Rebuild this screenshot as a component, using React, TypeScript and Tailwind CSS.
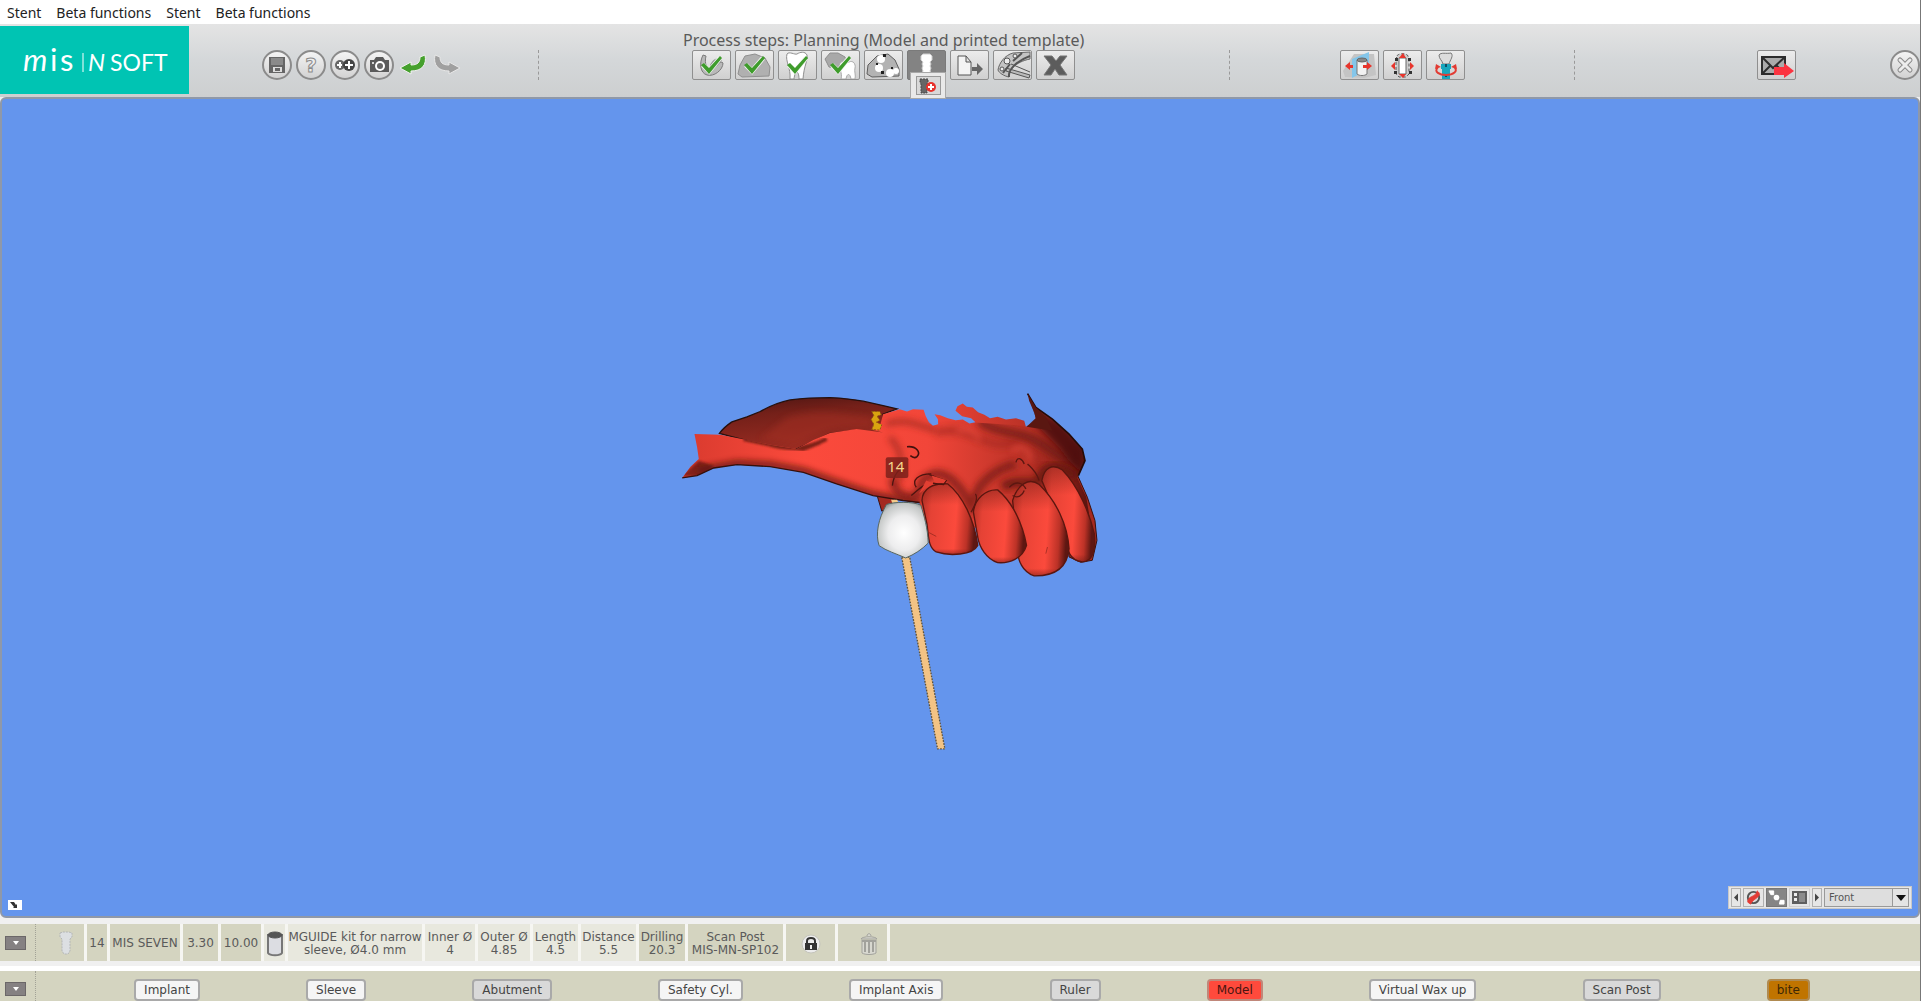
import React, { useState } from "react"

const menuItems = ["Stent", "Beta functions", "Stent", "Beta functions"]

interface Layer {
  name: string
  tone: "on" | "off" | "red" | "orange"
}

const layers: Layer[] = [
  { name: "Implant", tone: "on" },
  { name: "Sleeve", tone: "on" },
  { name: "Abutment", tone: "off" },
  { name: "Safety Cyl.", tone: "on" },
  { name: "Implant Axis", tone: "on" },
  { name: "Ruler", tone: "off" },
  { name: "Model", tone: "red" },
  { name: "Virtual Wax up", tone: "on" },
  { name: "Scan Post", tone: "off" },
  { name: "bite", tone: "orange" },
]

const tones = {
  on: "bg-[#f5f5f5] border-[#a9a9a9] text-[#444]",
  off: "bg-[#d9d9d9] border-[#a9a9a9] text-[#444]",
  red: "bg-[#ff4a3c] border-[#c0877a] text-[#4a1510]",
  orange: "bg-[#c07400] border-[#b08a50] text-[#3d2705]",
}

const GreenCheck = () => (
  <>
    <path
      d="M11 14 L17 20 L28 7"
      fill="none"
      stroke="#f4f4f4"
      strokeWidth="5"
    />
    <path
      d="M9 14 L12 12 L17 17 L28 5 L30 7 L17 23 Z"
      fill="#3f9c2c"
    />
  </>
)

const Arch = () => (
  <>
    <path
      d="M11 4 C7 12 8 22 15 24 C22 26 31 19 31 12 C29 9 24 14 20 17 C15 19 12 13 14 5 Z"
      fill="#b9b9b9"
      stroke="#7b7b7b"
    />
    <path d="M18 14 C21 8 26 5 30 9 C28 13 24 16 19 19 Z" fill="#959595" />
    <GreenCheck />
  </>
)

const ModelBlock = () => (
  <>
    <path
      d="M3 23 L5 14 L10 5 L20 3 L30 7 L35 16 L34 25 L7 26 Z"
      fill="#b0b0b0"
      stroke="#8f8f8f"
    />
    <GreenCheck />
  </>
)

const Tooth = () => (
  <>
    <path
      d="M9 3 C11 0 17 4 19 3 C22 1 27 0 29 4 C30 10 26 14 25 28 L21 28 C21 19 17 19 16 28 L12 28 C13 17 7 10 9 3 Z"
      fill="#fff"
      stroke="#8f8f8f"
    />
    <GreenCheck />
  </>
)

const ModelTooth = () => (
  <>
    <path
      d="M4 8 L9 2 L17 2 L24 6 L26 13 L18 18 L8 16 Z"
      fill="#a9a9a9"
      stroke="#8f8f8f"
    />
    <path
      d="M19 12 C22 9 25 13 28 11 C32 9 35 13 34 17 C33 20 35 24 34 28 L30 28 C29 22 26 22 25 28 L20 28 C22 22 17 17 19 12 Z"
      fill="#fff"
      stroke="#aaa"
    />
    <GreenCheck />
  </>
)

const Template = () => (
  <>
    <path
      d="M3 23 L4 14 L13 5 L24 3 L31 9 L35 18 L35 25 L8 26 Z"
      fill="#b3b3b3"
      stroke="#5e5e5e"
    />
    <circle cx="17" cy="8" r="4" fill="#fff" />
    <circle cx="15" cy="17" r="4" fill="#fff" />
    <circle cx="26" cy="22" r="4" fill="#fff" />
    <circle cx="32" cy="20" r="3" fill="#fff" />
    <path
      d="M19 3h3v3h-3z M12 12h2v2h-2z M17 20h3v3h-3z M27 16h2v2h-2z"
      fill="#222"
    />
  </>
)

const ImplantStep = () => (
  <path
    d="M14 5 L16 3 L23 3 L25 5 L25 9 L23 11 L24 13 L23 15 L24 17 L23 20 L24 22 L15 22 L16 20 L15 17 L16 15 L15 13 L16 11 L14 9 Z"
    fill="#fff"
    stroke="#cfcfcf"
  />
)

const ExportFile = () => (
  <>
    <path
      d="M8 5 L16 5 L21 11 L21 24 L8 24 Z M16 5 L16 11 L21 11"
      fill="#f4f4f4"
      stroke="#555"
    />
    <path d="M22 16 L27 16 L27 12 L33 18 L27 24 L27 20 L22 20 Z" fill="#666" />
  </>
)

const Guide = () => (
  <>
    <path
      d="M37 1 L20 2 C12 4 6 12 5 19 C6 22 11 25 16 26 C15 20 22 11 37 8 Z"
      fill="#c4c4c4"
      stroke="#666"
    />
    <path
      d="M13 17 L37 24 L36 27 L13 20 Z M18 13 L37 21"
      fill="#bbb"
      stroke="#555"
    />
    <path
      d="M16 26 C15 18 24 10 37 5 M10 22 L17 13 M20 10 L29 2"
      fill="none"
      stroke="#555"
      strokeWidth="2"
    />
    <circle cx="14" cy="10" r="3" fill="#eee" stroke="#555" />
    <circle cx="22" cy="5" r="2" fill="#eee" stroke="#555" />
    <circle cx="9" cy="18" r="2" fill="#eee" stroke="#555" />
  </>
)

const CrossStep = () => (
  <path
    d="M8 5 H16 L20 10 L24 5 H31 L24 14 L31 24 H23 L19 18 L15 24 H8 L15 14 Z"
    fill="#5c5c5c"
    stroke="#777"
  />
)

const steps = [
  { label: "Scan data", icon: <Arch /> },
  { label: "Model", icon: <ModelBlock /> },
  { label: "Tooth", icon: <Tooth /> },
  { label: "Wax up", icon: <ModelTooth /> },
  { label: "Registration", icon: <Template /> },
  { label: "Planning", icon: <ImplantStep /> },
  { label: "Export", icon: <ExportFile /> },
  { label: "Template", icon: <Guide /> },
  { label: "Finish", icon: <CrossStep /> },
]

const RoundButton = ({
  label,
  children,
}: {
  label: string
  children: React.ReactNode
}) => (
  <button
    type="button"
    aria-label={label}
    className="flex size-[30px] shrink-0 items-center justify-center rounded-full border-2 border-[#8b8b8b] bg-linear-to-b from-[#f4f4f4] to-[#d2d2d2]"
  >
    <svg viewBox="0 0 26 26" className="size-[26px]">
      {children}
    </svg>
  </button>
)

const ToolButton = ({
  label,
  active,
  children,
}: {
  label: string
  active?: boolean
  children: React.ReactNode
}) => (
  <button
    type="button"
    aria-label={label}
    className={`h-[30px] w-[39px] shrink-0 rounded-xs border ${
      active
        ? "border-[#7a7a7a] bg-[#838383]"
        : "border-[#8f8f8f] bg-linear-to-b from-[#ececec] to-[#d0d0d0]"
    }`}
  >
    <svg viewBox="1 0 37 28" className="h-[28px] w-[37px]">
      {children}
    </svg>
  </button>
)

const Logo = () => (
  <div className="mt-[2px] h-[68px] w-[189px] shrink-0 bg-[#00c4b3]">
    <svg
      viewBox="0 0 189 68"
      className="size-full font-[Lato,sans-serif]"
      fill="#fff"
    >
      <text x="23" y="45" fontSize="31" fontStyle="italic">
        m
      </text>
      <text x="50" y="45" fontSize="31">
        i
      </text>
      <text x="60" y="45" fontSize="31">
        s
      </text>
      <path d="M83 27 V46" stroke="#fff" />
      <text x="88" y="45" fontSize="24" fontStyle="italic">
        N
      </text>
      <text x="110" y="45" fontSize="23">
        SOFT
      </text>
    </svg>
  </div>
)

const JawModel = () => (
  <svg
    viewBox="0 0 1921 820"
    className="absolute inset-0 size-full"
    role="img"
    aria-label="Jaw model"
  >
    <defs>
      <linearGradient id="palate" x1="0" y1="0" x2="0.3" y2="1">
        <stop offset="0" stopColor="#4a1512" />
        <stop offset="0.35" stopColor="#742019" />
        <stop offset="1" stopColor="#9a2c22" />
      </linearGradient>
      <linearGradient id="gum" x1="0" y1="0" x2="1" y2="0">
        <stop offset="0" stopColor="#d83a2e" />
        <stop offset="0.3" stopColor="#fb4a3c" />
        <stop offset="0.6" stopColor="#f24639" />
        <stop offset="0.85" stopColor="#b83126" />
        <stop offset="0.95" stopColor="#861f18" />
        <stop offset="1" stopColor="#52120e" />
      </linearGradient>
      <linearGradient id="incisor" x1="0" y1="0" x2="1" y2="0.1">
        <stop offset="0" stopColor="#b23025" />
        <stop offset="0.2" stopColor="#e54235" />
        <stop offset="0.65" stopColor="#fb4a3c" />
        <stop offset="0.87" stopColor="#bc3227" />
        <stop offset="1" stopColor="#5e1712" />
      </linearGradient>
      <linearGradient id="incisorTop" x1="0" y1="0" x2="0" y2="1">
        <stop offset="0" stopColor="#6a1a13" stopOpacity="0.45" />
        <stop offset="0.3" stopColor="#6a1a13" stopOpacity="0" />
        <stop offset="0.92" stopColor="#6a1a13" stopOpacity="0" />
        <stop offset="1" stopColor="#6a1a13" stopOpacity="0.5" />
      </linearGradient>
      <radialGradient id="crown" cx="0.52" cy="0.55" r="0.62">
        <stop offset="0" stopColor="#ffffff" />
        <stop offset="0.5" stopColor="#ededee" />
        <stop offset="0.85" stopColor="#c3c6c5" />
        <stop offset="1" stopColor="#858d8b" />
      </radialGradient>
      <filter id="soft" x="-30%" y="-30%" width="160%" height="160%">
        <feGaussianBlur stdDeviation="9" />
      </filter>
      <filter id="edge" x="-10%" y="-10%" width="120%" height="120%">
        <feGaussianBlur stdDeviation="3" />
      </filter>
      <clipPath id="gumClip">
        <path d="M72 160 L150 162 L215 175 L300 192 L380 205 L480 155 L560 145 L610 150 L640 100 L690 85 L760 87 L770 110 L790 135 L806 130 L797 100 L835 112 L880 117 L915 125 L1070 135 L1100 112 L1075 38 L1100 80 L1150 115 L1200 160 L1240 205 L1248 240 L1225 292 L1252 350 L1275 420 L1283 480 L1270 540 L1040 400 L900 420 L760 420 L750 368 L700 360 L610 345 L500 310 L400 275 L300 258 L200 252 L130 262 L80 285 L35 292 L60 258 L85 235 L80 200 Z" />
      </clipPath>
    </defs>
    <g transform="translate(670 283) scale(0.3333)">
      <path
        d="M622 345 L672 350 L665 380 L636 392 Z"
        fill="#a32a21"
        stroke="#3c100c"
        strokeWidth="3"
      />
      <path
        d="M147 158 C160 140 175 130 185 123 L230 108 L270 92 C300 75 330 63 360 57 C400 52 440 50 480 50 C520 52 550 55 580 61 L640 74 L682 84 L640 100 L650 165 L560 148 L480 158 L370 210 L230 180 Z"
        fill="url(#palate)"
        stroke="#26100d"
        strokeWidth="4"
      />
      <path
        d="M350 110 C450 80 520 100 610 110 L600 140 C500 130 430 160 380 195 L270 175 Z"
        fill="#a22e24"
        opacity="0.55"
        filter="url(#soft)"
      />
      <path
        d="M1226 285 L1255 350 L1278 420 L1284 480 L1270 540 L1235 546 L1200 530 L1190 400 L1130 250 Z"
        fill="#a52a20"
        stroke="#3a0f0b"
        strokeWidth="3"
      />
      <path
        d="M72 160 L150 162 L215 175 L300 192 L380 205 L430 178 L480 157 L560 145 L640 155 L610 148 L632 130 L640 100 L690 85 L712 92 L730 85 L762 87 L768 105 L778 125 L790 135 L806 130 L805 115 L795 100 L812 103 L835 112 L858 118 L880 116 L900 128 L918 124 L905 112 L878 106 L858 90 L864 76 L880 68 L892 78 L910 80 L926 94 L945 102 L962 112 L985 108 L1010 116 L1040 112 L1065 120 L1070 138 L1100 118 L1097 90 L1075 38 L1100 80 L1150 115 L1200 160 L1240 205 L1248 240 L1225 292 L1252 350 L1265 430 L1100 480 L960 450 L860 430 L762 420 L750 368 L700 360 L610 345 L500 310 L400 275 L300 258 L200 252 L130 262 L80 285 L35 292 L60 258 L85 235 L80 200 Z"
        fill="url(#gum)"
      />
      <g clipPath="url(#gumClip)">
        <path
          d="M35 285 L85 240 L130 255 L100 290 Z"
          fill="#6e1b15"
          opacity="0.8"
          filter="url(#edge)"
        />
        <path
          d="M80 270 L200 248 L300 252 L400 270 L500 305 L610 342 L750 368"
          fill="none"
          stroke="#5a1510"
          strokeWidth="18"
          opacity="0.85"
          filter="url(#soft)"
        />
        <path
          d="M220 175 L330 198 L400 205 L450 185 M300 192 C350 205 400 210 470 175"
          fill="none"
          stroke="#7c2119"
          strokeWidth="12"
          filter="url(#edge)"
        />
        <path
          d="M650 130 C700 110 740 130 800 150 M660 170 C690 200 700 230 690 300"
          fill="none"
          stroke="#9c2a20"
          strokeWidth="18"
          opacity="0.7"
          filter="url(#soft)"
        />
        <path
          d="M800 155 C900 130 940 200 1010 190 C1060 180 1080 230 1120 240"
          fill="none"
          stroke="#a52c22"
          strokeWidth="22"
          opacity="0.7"
          filter="url(#soft)"
        />
        <path
          d="M930 120 C980 160 1050 150 1100 180 C1140 200 1170 230 1220 250"
          fill="none"
          stroke="#6e1b14"
          strokeWidth="28"
          opacity="0.75"
          filter="url(#soft)"
        />
        <path
          d="M670 290 C670 340 700 350 740 350 L760 300 C790 270 820 275 850 300 C880 330 890 350 905 380 L930 320 C960 280 1000 260 1040 250"
          fill="none"
          stroke="#7a1f17"
          strokeWidth="26"
          opacity="0.8"
          filter="url(#soft)"
        />
        <path
          d="M1075 38 L1110 90 L1180 130 L1245 205 L1240 280 L1200 240 L1170 200 L1100 130 Z"
          fill="#4a110d"
          opacity="0.85"
          filter="url(#soft)"
        />
        <path
          d="M1000 320 C1040 290 1080 320 1110 300 C1120 260 1160 240 1220 290"
          fill="none"
          stroke="#601610"
          strokeWidth="28"
          opacity="0.8"
          filter="url(#soft)"
        />
        <path
          d="M860 150 C890 140 925 155 930 180 M1030 210 C1050 190 1080 200 1085 240"
          fill="none"
          stroke="#ff5546"
          strokeWidth="12"
          opacity="0.6"
          filter="url(#soft)"
        />
      </g>
      <path
        d="M35 292 L80 285 L130 262 L200 252 L300 258 L400 275 L500 310 L610 345 L700 360 L750 366"
        fill="none"
        stroke="#35100c"
        strokeWidth="4"
      />
      <path
        d="M1075 38 L1100 80 L1150 115 L1200 160 L1240 205 L1248 240 L1228 285"
        fill="none"
        stroke="#260b08"
        strokeWidth="5"
      />
      <path
        d="M1075 38 L1080 60 L1095 95 L1100 112 L1072 138 L1150 150 L1130 108 L1100 80 Z"
        fill="#5a1711"
      />
      {[
        "M1118 300 C1125 260 1150 248 1180 268 C1230 320 1262 400 1276 460 C1282 510 1270 545 1240 545 C1200 540 1195 510 1190 470 Z",
        "M1030 360 C1045 310 1080 290 1110 312 C1160 360 1195 430 1200 505 C1195 560 1160 588 1095 587 C1060 575 1045 540 1046 510 Z",
        "M912 395 C915 355 950 325 985 328 C1030 365 1060 430 1072 495 C1060 535 1020 550 985 547 C950 535 930 500 925 470 Z",
        "M757 360 C758 325 790 306 835 310 C880 345 915 420 925 495 C910 525 840 528 800 515 C775 500 778 470 772 430 Z",
      ].map((d) => (
        <g key={d}>
          <path d={d} fill="url(#incisor)" />
          <path
            d={d}
            fill="url(#incisorTop)"
            stroke="#5a160f"
            strokeWidth="4"
          />
        </g>
      ))}
      <path
        d="M712 198 C740 195 755 215 742 228 C735 234 728 230 722 225"
        fill="none"
        stroke="#43110d"
        strokeWidth="5"
      />
      <path
        d="M668 315 C672 280 690 260 705 265 M740 320 C725 300 745 280 785 280 M775 280 L800 290 L830 300 L822 312 L790 308 M725 345 C750 325 755 315 780 308"
        fill="none"
        stroke="#4d140f"
        strokeWidth="4"
      />
      <path
        d="M1040 245 C1045 225 1060 235 1065 250 M1020 320 C1040 300 1060 305 1070 325 M1030 345 C1045 355 1060 345 1065 330 M1110 300 C1100 270 1085 260 1075 250 M905 395 C920 370 925 350 918 340"
        fill="none"
        stroke="#5c1711"
        strokeWidth="4"
      />
      <path
        d="M786 285 L830 298 L822 308 L795 304 Z M748 340 L770 300 L790 308 L760 330 Z"
        fill="#e23f32"
      />
      <path
        d="M775 455 L800 468 M1130 520 L1135 500"
        fill="none"
        stroke="#8a241b"
        strokeWidth="2"
      />
      <path
        d="M606 92 L630 92 L634 102 L622 106 L630 118 L620 124 L636 132 L630 148 L606 146 L612 130 L604 116 L612 104 Z"
        fill="#d9a410"
        stroke="#8f5f10"
        strokeWidth="3"
        strokeDasharray="6 4"
      />
      <path d="M664 358 L682 358 L688 370 L668 370 Z" fill="#f4c98a" />
      <path
        d="M696 530 L720 530 L826 1108 L804 1108 Z"
        fill="#f3c384"
        stroke="#5d523c"
        strokeWidth="4"
        strokeDasharray="5 4"
      />
      <path
        d="M650 372 C670 364 730 362 754 374 C764 410 774 440 776 488 C756 508 735 522 708 533 C680 520 650 512 628 496 C616 460 626 415 650 372 Z"
        fill="url(#crown)"
        stroke="#56655f"
        strokeWidth="3"
      />
      <rect
        x="648"
        y="230"
        width="68"
        height="62"
        rx="6"
        fill="#7d211b"
        opacity="0.85"
      />
    </g>
    <text
      x="896"
      y="374"
      fontSize="15"
      textAnchor="middle"
      fill="#f7d68c"
      className="font-['Noto_Sans',sans-serif]"
    >
      14
    </text>
  </svg>
)

const ViewControls = () => {
  const [view, setView] = useState("Front")

  return (
    <div className="absolute right-[6px] bottom-[7px] flex h-[23px] items-center gap-[2px] border border-[#c8c8c8] bg-[#e6e6e6] px-[2px]">
      <button
        type="button"
        aria-label="Previous"
        className="h-[19px] w-[10px] border border-[#b0b0b0]"
      >
        <svg viewBox="0 0 8 16" className="h-[17px] w-[8px]">
          <path d="M6 4 L2 8 L6 12 Z" fill="#444" />
        </svg>
      </button>
      <button
        type="button"
        aria-label="Hide"
        className="h-[19px] w-[21px] border border-[#b0b0b0]"
      >
        <svg viewBox="0 0 20 18" className="h-[17px] w-[19px]">
          <circle
            cx="10"
            cy="9"
            r="6"
            fill="#ddd"
            stroke="#555"
            strokeWidth="2"
          />
          <path
            d="M4 14 C3 7 13 9 14 2 C21 8 9 10 7 16 Z"
            fill="#e33b35"
            stroke="#e33b35"
          />
        </svg>
      </button>
      <button
        type="button"
        aria-label="Points"
        className="h-[19px] w-[21px] border border-[#777] bg-[#858585]"
      >
        <svg viewBox="0 0 20 18" className="h-[17px] w-[19px]">
          <path
            d="M2 2 H7 V6 H4 Z M14 12 H18 V16 H13 Z"
            fill="#fff"
            stroke="#fff"
          />
          <circle cx="10" cy="9" r="3" fill="#fff" />
        </svg>
      </button>
      <button
        type="button"
        aria-label="Layout"
        className="h-[19px] w-[21px] border border-[#d0d0d0]"
      >
        <svg viewBox="0 0 19 17" className="h-[17px] w-[19px]">
          <rect x="2" y="2" width="15" height="13" fill="#5f5f5f" />
          <path d="M4 4h3v3h-3z M4 9h3v3h-3z" fill="#eee" />
          <path d="M9 4h6v9h-6z" fill="#8b8b8b" />
        </svg>
      </button>
      <button
        type="button"
        aria-label="Next"
        className="h-[19px] w-[10px] border border-[#b0b0b0]"
      >
        <svg viewBox="0 0 8 16" className="h-[17px] w-[8px]">
          <path d="M2 4 L6 8 L2 12 Z" fill="#444" />
        </svg>
      </button>
      <div className="relative">
        <select
          aria-label="View"
          value={view}
          onChange={(e) => setView(e.target.value)}
          className="block h-[19px] w-[85px] appearance-none border border-[#999] bg-[#dedede] pl-1 text-[10px] leading-[17px] text-[#555]"
        >
          <option>Front</option>
          <option>Back</option>
          <option>Left</option>
          <option>Right</option>
        </select>
        <span className="pointer-events-none absolute top-0 right-0 flex h-[19px] w-[17px] items-center justify-center border border-[#999] bg-[#e4e4e4]">
          <svg viewBox="0 0 10 6" className="h-[6px] w-[10px]">
            <path d="M0 0 H10 L5 6 Z" fill="#111" />
          </svg>
        </span>
      </div>
    </div>
  )
}

const BarToggle = ({ label }: { label: string }) => (
  <div className="flex h-full w-[36px] shrink-0 items-center border-r border-dotted border-[#a2a296] pl-[5px]">
    <button
      type="button"
      aria-label={label}
      className="flex h-[14px] w-[21px] items-center justify-center border border-[#6b6768] bg-[#858182]"
    >
      <svg viewBox="0 0 6 4" className="h-[4px] w-[6px]">
        <path d="M0 0 H6 L3 4 Z" fill="#fff" />
      </svg>
    </button>
  </div>
)

const Cell = ({
  width,
  light,
  children,
}: {
  width: string
  light?: boolean
  children?: React.ReactNode
}) => (
  <div
    className={`flex shrink-0 flex-col items-center justify-center pt-[2px] text-center whitespace-nowrap ${width} ${
      light ? "bg-[#e8e8de]" : "bg-[#d4d4c0]"
    }`}
  >
    {children}
  </div>
)

const App: React.FC = () => {
  const [step, setStep] = useState(5)

  return (
    <div className="flex h-screen flex-col overflow-hidden border-r border-[#777] bg-[#f0f0f0] font-['DejaVu_Sans',Verdana,sans-serif] text-[#5a5a5a]">
      <nav className="flex h-6 shrink-0 items-center gap-[15px] bg-white px-[7px] pt-[2px] font-['Noto_Sans',sans-serif] text-[14px] leading-5 text-[#222]">
        {menuItems.map((item, i) => (
          <button key={i} type="button">
            {item}
          </button>
        ))}
      </nav>

      <header className="grid h-[73px] shrink-0 grid-cols-[28%_36%_18%_1fr] bg-linear-to-b from-[#e4e4e4] via-[#d4d7d9] to-[#cdcfd0]">
        <div className="flex">
          <Logo />
          <div className="mt-[26px] ml-[73px] flex items-start gap-1">
            <RoundButton label="Save">
              <path d="M5 5 H21 V21 H5 Z" fill="#666" />
              <path d="M7 6 H19 V13 H7 Z" fill="#8a8a8a" />
              <path d="M9 15 H18 V20 H9 Z" fill="#ddd" />
              <path d="M11 16 H16 V19 H11 Z" fill="#666" />
            </RoundButton>
            <RoundButton label="Help">
              <text
                x="13"
                y="20"
                fontSize="20"
                fontWeight="bold"
                textAnchor="middle"
                fill="#eee"
                stroke="#8a8a8a"
              >
                ?
              </text>
            </RoundButton>
            <RoundButton label="Add implant">
              <circle cx="8" cy="13" r="5" fill="#666" />
              <circle cx="17" cy="13" r="6" fill="#444" />
              <path
                d="M5 13 H10 M8 10 V16 M13 13 H21 M17 9 V17"
                stroke="#fff"
                strokeWidth="2"
              />
            </RoundButton>
            <RoundButton label="Screenshot">
              <path
                d="M4 8 H8 L10 5 H17 L19 8 H23 V20 H4 Z"
                fill="#5a5a5a"
              />
              <circle cx="14" cy="14" r="5" fill="#fff" />
              <circle cx="14" cy="14" r="3" fill="#666" />
              <circle cx="7" cy="11" r="1" fill="#fff" />
            </RoundButton>
            <button type="button" aria-label="Undo" className="w-[30px]">
              <svg viewBox="0 0 30 30" className="size-[30px]">
                <path
                  d="M2 18 L13 12 L13 15 C20 15 22 12 22 7 L27 5 C29 15 24 21 13 21 L13 24 Z"
                  fill="#45a02d"
                  stroke="#f2f2f2"
                />
              </svg>
            </button>
            <button type="button" aria-label="Redo" className="w-[30px]">
              <svg viewBox="0 0 30 30" className="size-[30px]">
                <path
                  d="M28 18 L17 12 L17 15 C10 15 8 12 8 7 L3 5 C1 15 6 21 17 21 L17 24 Z"
                  fill="#a0a0a0"
                  stroke="#e8e8e8"
                />
              </svg>
            </button>
          </div>
        </div>

        <div className="flex pt-[6px]">
          <div className="mt-[20px] h-[30px] border-l border-dashed border-[#999]" />
          <div className="flex flex-1 flex-col items-center">
            <h1 className="h-5 font-['Noto_Sans',sans-serif] text-[16px] leading-5 whitespace-nowrap">
              Process steps: Planning (Model and printed template)
            </h1>
            <div className="flex gap-1">
              {steps.map(({ label, icon }, i) => (
                <div
                  key={label}
                  className="relative"
                  onClick={() => setStep(i)}
                >
                  <ToolButton label={label} active={i === step}>
                    {icon}
                  </ToolButton>
                  {i === step && (
                    <div className="absolute top-[22px] left-[3px] z-10 flex h-[27px] w-[36px] items-center justify-center border border-[#a8a8a8] bg-[#e9e9e9]">
                      <button
                        type="button"
                        aria-label="Add implant to plan"
                        className="h-[19px] w-[25px] border border-[#999] bg-[#d9d9d9]"
                      >
                        <svg viewBox="0 0 23 17" className="h-[17px] w-[23px]">
                          <path
                            d="M3 2 H11 V5 L10 7 V16 H4 V7 L3 5 Z"
                            fill="#666"
                            stroke="#444"
                            strokeDasharray="2 1"
                          />
                          <circle cx="14" cy="10" r="5" fill="#e8322c" />
                          <path
                            d="M11 10 H17 M14 7 V13"
                            stroke="#fff"
                            strokeWidth="2"
                          />
                        </svg>
                      </button>
                    </div>
                  )}
                </div>
              ))}
            </div>
          </div>
        </div>

        <div className="flex pt-[26px]">
          <div className="h-[30px] border-l border-dashed border-[#999]" />
          <div className="flex flex-1 justify-center gap-1">
            <ToolButton label="Move sleeve">
              <path
                d="M3 20 L14 3 L34 3 L36 24 L24 27 L5 26 Z"
                fill="#c4c4c4"
              />
              <path d="M12 8 L29 1 V18 L12 27 Z" fill="#84c6ea" />
              <path
                d="M17 9 V23 C19 25 25 25 27 23 V9 Z"
                fill="#f2f2f2"
                stroke="#777"
              />
              <ellipse
                cx="22"
                cy="9"
                rx="5"
                ry="2"
                fill="#888"
                stroke="#666"
              />
              <path
                d="M5 15 L10 11 V14 H13 V17 H10 V19 Z M32 15 L27 11 V14 H23 V17 H27 V19 Z"
                fill="#e8352c"
              />
            </ToolButton>
            <ToolButton label="Resize implant">
              <path
                d="M14 5 C15 2 24 2 25 5 L26 9 V23 L23 26 H16 L13 23 V9 Z"
                fill="#ccc"
                stroke="#555"
                strokeDasharray="3 2"
              />
              <path d="M16 7 H23 V23 H16 Z" fill="#fff" stroke="#666" />
              <path
                d="M20 2 L23 7 H16 Z M20 27 L16 23 H23 Z M8 15 L12 11 V19 Z M31 15 L27 11 V19 Z"
                fill="#e8352c"
              />
              <path
                d="M12 7h3v3h-3z M25 7h3v3h-3z M11 20h3v3h-3z M26 20h3v3h-3z"
                fill="#333"
              />
            </ToolButton>
            <ToolButton label="Rotate implant">
              <path
                d="M13 4 C15 1 20 3 25 2 C28 5 24 9 23 13 H17 C16 9 13 8 13 4 Z"
                fill="#ddd"
                stroke="#777"
              />
              <path d="M15 13 H25 V18 H24 V28 H16 V18 H15 Z" fill="#18a6bd" />
              <path d="M19 13h2v3h-2z M19 23h2v3h-2z" fill="#114d66" />
              <path
                d="M12 16 C7 21 14 24 20 24 C27 24 33 20 28 16"
                fill="none"
                stroke="#e23b33"
                strokeWidth="2"
              />
              <path
                d="M9 18 L10 13 L15 16 Z M31 18 L30 13 L25 16 Z"
                fill="#e23b33"
              />
            </ToolButton>
          </div>
        </div>

        <div className="flex pt-[26px]">
          <div className="h-[30px] border-l border-dashed border-[#999]" />
          <div className="flex flex-1 justify-end gap-[94px]">
            <ToolButton label="Send by mail">
              <path
                d="M5 6 H28 V23 H5 Z"
                fill="#aaa"
                stroke="#2c2c2c"
                strokeWidth="2"
              />
              <path
                d="M5 6 L16 17 L28 6 M5 23 L14 14 M28 23 L19 14"
                fill="none"
                stroke="#2c2c2c"
                strokeWidth="2"
              />
              <path
                d="M17 16 H27 V12 L37 20 L27 27 V24 H17 Z"
                fill="#fb3440"
              />
            </ToolButton>
            <RoundButton label="Close">
              <path
                d="M8 8 L18 18 M18 8 L8 18"
                stroke="#8a8a8a"
                strokeWidth="5"
                strokeLinecap="round"
              />
              <path
                d="M8 8 L18 18 M18 8 L8 18"
                stroke="#ececec"
                strokeWidth="3"
                strokeLinecap="round"
              />
            </RoundButton>
          </div>
        </div>
      </header>

      <main className="relative min-h-0 flex-1 rounded-md border-2 border-[#8f98a8] bg-[#6495ed]">
        <JawModel />
        <button
          type="button"
          aria-label="Restore view"
          className="absolute bottom-[6px] left-[6px] h-[10px] w-[14px] bg-white"
        >
          <svg viewBox="0 0 14 10" className="h-[10px] w-[14px]">
            <path d="M2 2 L6 2 L8 5 L9 4 V8 H5 L6 7 Z" fill="#333" />
          </svg>
        </button>
        <ViewControls />
      </main>

      <section className="mt-[6px] flex h-[37px] shrink-0 gap-[3px] bg-[#f6f6f2] text-[12px] leading-[13px]">
        <div className="flex w-[84px] shrink-0 items-center bg-[#d4d4c0]">
          <BarToggle label="Collapse implant bar" />
          <svg viewBox="0 0 14 24" className="ml-[23px] h-[24px] w-[14px]">
            <path
              d="M1 2 L4 1 H10 L13 2 V6 L11 8 V20 L9 23 H5 L3 20 V8 L1 6 Z"
              fill="#dcdfe2"
              stroke="#b3b6b6"
              strokeDasharray="2 1"
            />
          </svg>
        </div>
        <Cell width="w-[20px]">14</Cell>
        <Cell width="w-[70px]">MIS SEVEN</Cell>
        <Cell width="w-[35px]">3.30</Cell>
        <Cell width="w-[40px]">10.00</Cell>
        <Cell width="w-[21px]" light>
          <svg viewBox="0 0 18 26" className="h-[26px] w-[18px]">
            <path
              d="M2 4 V22 C4 25 14 25 16 22 V4 Z"
              fill="#dcdde2"
              stroke="#777"
              strokeWidth="2"
            />
            <ellipse cx="9" cy="4" rx="7" ry="3" fill="#555" stroke="#555" />
          </svg>
        </Cell>
        <Cell width="w-[134px]" light>
          <span>MGUIDE kit for narrow</span>
          <span>sleeve, Ø4.0 mm</span>
        </Cell>
        <Cell width="w-[50px]" light>
          <span>Inner Ø</span>
          <span>4</span>
        </Cell>
        <Cell width="w-[52px]" light>
          <span>Outer Ø</span>
          <span>4.85</span>
        </Cell>
        <Cell width="w-[45px]" light>
          <span>Length</span>
          <span>4.5</span>
        </Cell>
        <Cell width="w-[55px]" light>
          <span>Distance</span>
          <span>5.5</span>
        </Cell>
        <Cell width="w-[46px]">
          <span>Drilling</span>
          <span>20.3</span>
        </Cell>
        <Cell width="w-[95px]">
          <span>Scan Post</span>
          <span>MIS-MN-SP102</span>
        </Cell>
        <Cell width="w-[49px]">
          <button type="button" aria-label="Lock">
            <svg viewBox="0 0 20 20" className="size-[20px]">
              <circle cx="10" cy="10" r="9" fill="#ececec" stroke="#c4c4bc" />
              <path d="M4 9 H16 V16 H4 Z" fill="#333" />
              <path
                d="M6 9 V7 C6 3 14 3 14 7 V9"
                fill="none"
                stroke="#333"
                strokeWidth="2"
              />
              <path d="M9 11 H11 V15 H9 Z" fill="#eee" />
            </svg>
          </button>
        </Cell>
        <Cell width="w-[49px]">
          <button type="button" aria-label="Delete" className="ml-3">
            <svg viewBox="0 0 18 22" className="h-[22px] w-[18px]">
              <path
                d="M2 7 V20 C5 22 13 22 16 20 V7 M1 6 C2 3 16 3 17 6 Z M7 3 C7 0 11 0 11 3"
                fill="#d8d8d0"
                stroke="#a2a29c"
              />
              <path
                d="M5 9 V19 M9 9 V20 M13 9 V19 M2 8 H16"
                stroke="#a2a29c"
                strokeWidth="2"
              />
            </svg>
          </button>
        </Cell>
        <div className="flex-1 bg-[#d4d4c0]" />
      </section>

      <footer className="mt-[5px] border-t-5 border-white">
        <div className="flex h-[30px] bg-[#d4d4c0]">
          <div className="h-[36px]">
            <BarToggle label="Collapse layer bar" />
          </div>
          <div className="-ml-2 flex flex-1 items-end justify-evenly pr-1">
            {layers.map(({ name, tone }) => (
              <button
                key={name}
                type="button"
                className={`h-[22px] rounded-sm border-2 px-2 text-[12px] leading-[18px] ${tones[tone]}`}
              >
                {name}
              </button>
            ))}
          </div>
        </div>
      </footer>
    </div>
  )
}

export default App
